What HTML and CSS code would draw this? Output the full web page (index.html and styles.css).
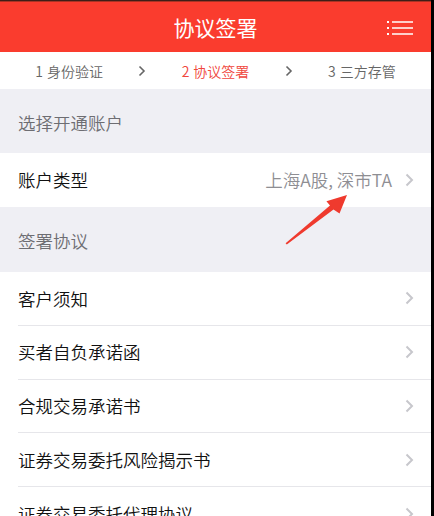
FILE: index.html
```html
<!DOCTYPE html>
<html lang="zh-CN">
<head>
<meta charset="utf-8">
<title>协议签署</title>
<link rel="stylesheet" href="styles.css">
</head>
<body>
<div class="page">
  <header class="topbar">
    <span class="spacer"></span>
    <h1 class="title">协议签署</h1>
    <button class="menu" aria-label="菜单">
      <svg width="27" height="16" viewBox="0 0 27 16" fill="none">
        <rect x="0" y="1" width="2" height="2" fill="#fff"/>
        <rect x="0" y="7" width="2" height="2" fill="#fff"/>
        <rect x="0" y="13" width="2" height="2" fill="#fff"/>
        <path d="M5 2H26M5 8H26M5 14H26" stroke="#fff" stroke-width="1.6"/>
      </svg>
    </button>
  </header>

  <nav class="steps">
    <span class="step"><span class="num">1</span>身份验证</span>
    <span class="step-sep"><svg width="8" height="12" viewBox="0 0 8 12"><path d="M1.5 1.5L6 6L1.5 10.5" stroke="#666" stroke-width="1.6" fill="none"/></svg></span>
    <span class="step active"><span class="num">2</span>协议签署</span>
    <span class="step-sep"><svg width="8" height="12" viewBox="0 0 8 12"><path d="M1.5 1.5L6 6L1.5 10.5" stroke="#666" stroke-width="1.6" fill="none"/></svg></span>
    <span class="step"><span class="num">3</span>三方存管</span>
  </nav>

  <div class="section-title">选择开通账户</div>
  <div class="list">
    <div class="row single">
      <span class="label">账户类型</span>
      <span class="value">上海A股, 深市TA</span>
      <svg class="chev" width="9" height="14" viewBox="0 0 9 14"><path d="M1.5 1.5L7 7L1.5 12.5" stroke="#c7c7cc" stroke-width="2" fill="none"/></svg>
    </div>
  </div>

  <div class="section-title second">签署协议</div>
  <ul class="list agreements">
    <li class="row"><span class="label">客户须知</span><svg class="chev" width="9" height="14" viewBox="0 0 9 14"><path d="M1.5 1.5L7 7L1.5 12.5" stroke="#c7c7cc" stroke-width="2" fill="none"/></svg></li>
    <li class="row"><span class="label">买者自负承诺函</span><svg class="chev" width="9" height="14" viewBox="0 0 9 14"><path d="M1.5 1.5L7 7L1.5 12.5" stroke="#c7c7cc" stroke-width="2" fill="none"/></svg></li>
    <li class="row"><span class="label">合规交易承诺书</span><svg class="chev" width="9" height="14" viewBox="0 0 9 14"><path d="M1.5 1.5L7 7L1.5 12.5" stroke="#c7c7cc" stroke-width="2" fill="none"/></svg></li>
    <li class="row"><span class="label">证券交易委托风险揭示书</span><svg class="chev" width="9" height="14" viewBox="0 0 9 14"><path d="M1.5 1.5L7 7L1.5 12.5" stroke="#c7c7cc" stroke-width="2" fill="none"/></svg></li>
    <li class="row"><span class="label">证券交易委托代理协议</span><svg class="chev" width="9" height="14" viewBox="0 0 9 14"><path d="M1.5 1.5L7 7L1.5 12.5" stroke="#c7c7cc" stroke-width="2" fill="none"/></svg></li>
  </ul>

  <svg class="annotation" width="434" height="516" viewBox="0 0 434 516">
    <polygon points="347,195 339.5,213.5 333.5,209.5 286.8,244.6 285.6,243.2 330,205.5 326.4,201.2" fill="#ef3a2e"/>
  </svg>
</div>
</body>
</html>
```

FILE: styles.css
```css
html, body {
  margin: 0;
  padding: 0;
  background: #000;
  overflow: hidden;
}

.page {
  position: relative;
  width: 431px;
  height: 516px;
  overflow: hidden;
  background: #efeff4;
  font-family: "Noto Sans CJK SC", "Noto Sans", sans-serif;
  font-weight: 350;
}

.topbar {
  display: grid;
  grid-template-columns: 1fr auto 1fr;
  align-items: center;
  height: 52px;
  box-sizing: border-box;
  padding: 2px 16px 0 16px;
  background: #fa3c2e;
  box-shadow: inset 0 1px 0 #3f1d17, inset 0 2px 0 #a93324;
}

.title {
  margin: 0;
  color: #fff;
  font-size: 21px;
  font-weight: 400;
  line-height: 1;
  letter-spacing: 0;
}

.menu {
  justify-self: end;
  display: flex;
  padding: 0;
  margin: 1px 1px 0 0;
  border: 0;
  background: none;
}

.steps {
  display: grid;
  grid-template-columns: 1fr 8px 1fr 8px 1fr;
  align-items: center;
  height: 37px;
  background: #fff;
  font-size: 14px;
  color: #666;
}

.step {
  text-align: center;
  line-height: 1;
}

.step .num {
  margin-right: 4px;
}

.step.active {
  color: #f0463c;
}

.step-sep {
  display: flex;
  justify-content: center;
}

.section-title {
  height: 64px;
  box-sizing: border-box;
  padding: 22px 0 0 18px;
  font-size: 17.5px;
  line-height: 24px;
  color: #6d6d72;
}

.section-title.second {
  height: 65px;
}

.list {
  margin: 0;
  padding: 0;
  list-style: none;
  background: #fff;
}

.row {
  display: flex;
  align-items: center;
  height: 52.8px;
  margin-left: 18px;
  padding-right: 17px;
  border-bottom: 1px solid #e6e6ea;
  font-size: 17.5px;
  color: #111;
}

.row.single {
  height: 54px;
  border-bottom: 0;
}

.label {
  flex: 1;
  line-height: 1;
}

.value {
  color: #8e8e93;
  line-height: 1;
  margin-right: 13px;
}

.chev {
  display: block;
  flex: none;
}

.annotation {
  position: absolute;
  left: 0;
  top: 0;
  pointer-events: none;
}
```
